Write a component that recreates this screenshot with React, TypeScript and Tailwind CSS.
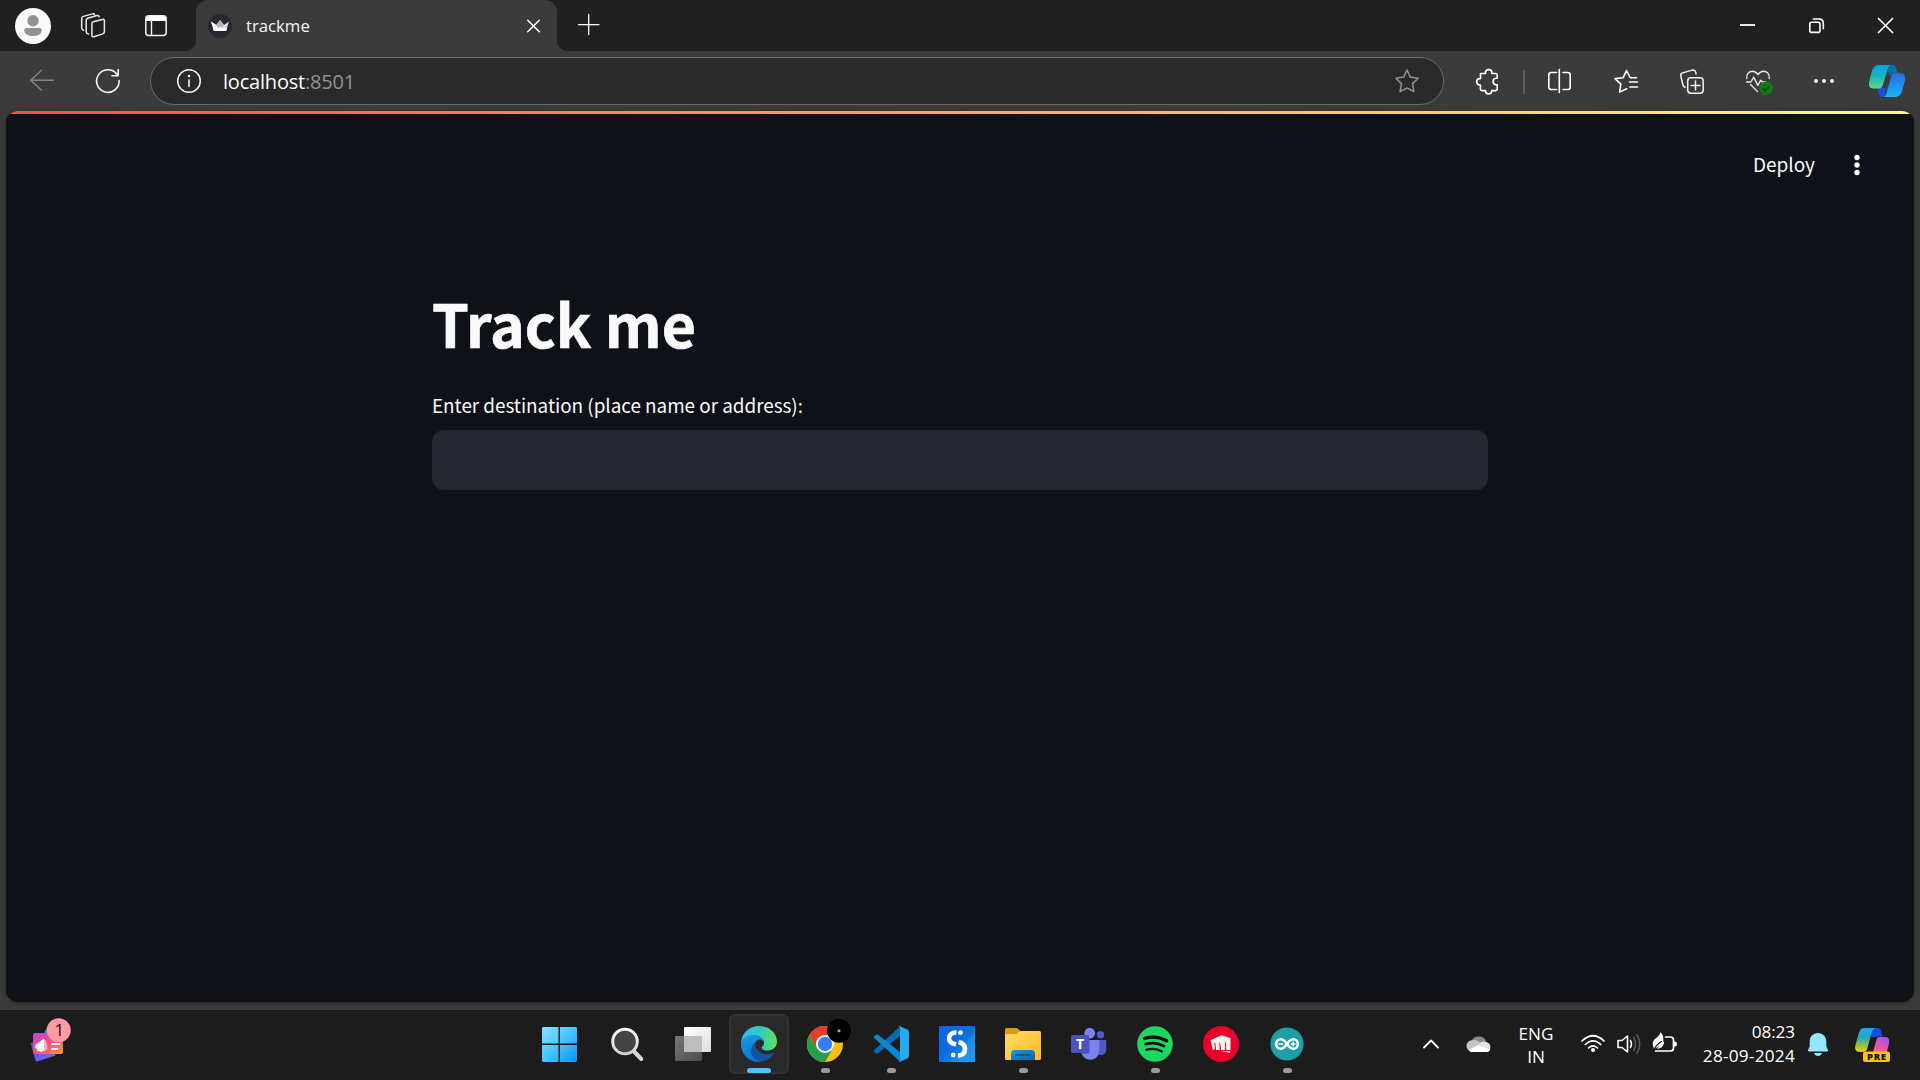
import type { ReactNode } from "react";

type ArtProps = { x: number; y: number; w: number; h: number; className?: string; children: ReactNode };

/* Inline drawing whose viewBox is given in page coordinates. */
function Art({ x, y, w, h, className = "", children }: ArtProps) {
  return (
    <svg
      width={w}
      height={h}
      viewBox={`${x} ${y} ${w} ${h}`}
      fill="none"
      stroke="none"
      strokeLinecap="round"
      strokeLinejoin="round"
      className={`block shrink-0 overflow-visible ${className}`}
    >
      {children}
    </svg>
  );
}

function TitleBar() {
  return (
    <header className="flex h-[51px] shrink-0 bg-[#202020]">
      <div className="flex h-full w-[196px] items-start">
        <Art x={15} y={8} w={36} h={36} className="mt-2 ml-[15px]">
          <circle cx="33" cy="26" r="18" fill="#f9f9f9" />
          <circle cx="33" cy="20.7" r="5.7" fill="#929292" />
          <path d="M26.5 28h13c1.4 0 2.2.8 2.2 2.2 0 3.500-4 5.900-8.700 5.900s-8.700-2.400-8.700-5.900c0-1.400.8-2.200 2.200-2.200z" fill="#929292" />
        </Art>
        <Art x={80} y={12} w={27} h={27} className="mt-3 ml-[29px]">
          <g stroke="#e8e8e8" strokeWidth="1.5">
            <path d="M93.200 21.700 102.400 19.400q2-.4 2 1.600v10.800q0 1.600-1.600 2.100l-8.900 2.800q-2 .5-2-1.500V23.700q0-1.600 1.300-2z" />
            <path d="M88.700 33.900l-1-.2q-1.500-.4-1.500-2V20.500q0-1.700 1.500-2.200l9.300-2.800q1.800-.4 2.200 1.300" />
            <path d="M83.500 30.200l-.8-.3q-1-.4-1-1.800V18.600q0-1.700 1.600-2.200l9.200-2.500q1.600-.4 2.100.9" />
          </g>
        </Art>
        <Art x={145} y={15} w={22} h={22} className="mt-[15px] ml-[38px]">
          <rect x="145.800" y="15.800" width="20.400" height="19.600" rx="3" stroke="#f2f2f2" strokeWidth="1.500" />
          <path d="M146 21v-2q0-3 3-3h14q3 0 3 3v2z" fill="#fff" />
          <path d="M151.500 21v14" stroke="#f2f2f2" strokeWidth="1.400" />
        </Art>
      </div>
      <div className="relative flex h-full w-[361px] items-center rounded-t-[12px] bg-[#3b3b3b]">
        <div className="absolute bottom-0 -left-[10px] size-[10px] bg-[#3b3b3b]">
          <div className="size-full rounded-br-[10px] bg-[#202020]" />
        </div>
        <div className="absolute -right-[10px] bottom-0 size-[10px] bg-[#3b3b3b]">
          <div className="size-full rounded-bl-[10px] bg-[#202020]" />
        </div>
        <Art x={208} y={14} w={24} h={24} className="ml-3">
          <circle cx="220" cy="26" r="12" fill="#262730" />
          <path d="M211 21.500l5.200 3.500 3.900-5 3.900 5 5-3.500-2.900 9.500H214z" fill="#d8d8d8" />
          <path d="M211 21.500l5.200 3.500L220 31h-6z" fill="#fff" />
          <path d="M216.200 25l3.900-5 3.900 5-4 6z" fill="#b4b4b4" />
          <path d="M213.200 28.500l6.900-1.500 6.700 1.500-.7 2.500H214z" fill="#fff" />
        </Art>
        <span className="ml-[14px] w-[281px] font-['Open_Sans'] text-[16.800px] leading-6 tracking-[-0.03px] text-[#f4f4f4]">trackme</span>
        <Art x={527} y={19} w={13} h={13}>
          <path d="M527.700 20.200l11.600 11.600m0-11.600l-11.600 11.600" stroke="#fff" strokeWidth="1.500" />
        </Art>
      </div>
      <Art x={578} y={14} w={22} h={22} className="mt-[14px] ml-[21px]">
        <path d="M578.500 24.600h20.500M588.700 14.500v20" stroke="#fff" strokeWidth="1.300" />
      </Art>
      <Art x={1740} y={17} w={16} h={16} className="mt-[17px] ml-auto">
        <path d="M1740 25h15" stroke="#fff" strokeWidth="1.800" strokeLinecap="butt" />
      </Art>
      <Art x={1808} y={17} w={17} h={17} className="mt-[17px] ml-[52px]">
        <rect x="1809.800" y="22.200" width="10.200" height="10.200" rx="2" stroke="#fff" strokeWidth="1.600" />
        <path d="M1813.300 19h5.700q4.300 0 4.300 4.300v5.500" stroke="#fff" strokeWidth="1.600" />
      </Art>
      <Art x={1877} y={17} w={17} h={17} className="mt-[17px] mr-[26px] ml-[52px]">
        <path d="M1878.500 18.500l14 14m0-14l-14 14" stroke="#fff" strokeWidth="1.700" />
      </Art>
    </header>
  );
}

function Toolbar() {
  return (
    <div className="flex h-[60px] shrink-0 items-start bg-[#3b3b3b]">
      <Art x={29} y={68} w={26} h={26} className="mt-[17px] ml-[29px]">
        <path d="M53.300 80.300H31M41.500 70.300l-10.700 10 10.700 10" stroke="#858585" strokeWidth="1.500" />
      </Art>
      <Art x={95} y={68} w={26} h={26} className="mt-[17px] ml-10">
        <path d="M119.200 80.500A11.300 11.300 0 1 1 116.700 73.900L118 75.700M118.200 69.500v6.300h-6.300" stroke="#f5f5f5" strokeWidth="1.600" />
      </Art>
      <div className="mt-1.5 ml-[29px] flex h-12 w-[1294px] items-center rounded-full border border-[#6a6a6a] bg-[#2a2a2a]">
        <Art x={176} y={68} w={26} h={26} className="ml-[25px]">
          <circle cx="189" cy="81" r="11.300" stroke="#f5f5f5" strokeWidth="1.500" />
          <path d="M189 80v6.500" stroke="#fff" strokeWidth="1.500" />
          <circle cx="189" cy="76" r="1.200" fill="#fff" />
        </Art>
        <div className="mt-0.5 ml-[21px] flex-1 font-['Open_Sans'] text-[20px] leading-6 tracking-[-0.2px] text-white">
          localhost<span className="text-[#929292]">:8501</span>
        </div>
        <Art x={1394} y={68} w={26} h={26} className="mr-[23px]">
          <path d="M1407 70l3.300 7.100 7.900 1.100-5.700 5.400 1.400 8.100-6.900-3.700-6.900 3.700 1.400-8.100-5.700-5.400 7.900-1.100z" stroke="#929292" strokeWidth="1.500" />
        </Art>
      </div>
      <Art x={1475} y={68} w={26} h={28} className="mt-[17px] ml-[31px]">
        <path
          d="M1480.500 73.500h5v-.7a3.200 3.200 0 0 1 6.400 0v.7h3.700q1.600 0 1.600 1.600v3.200h-.9a3.200 3.200 0 0 0 0 6.400h.9v4.300q0 1.600-1.600 1.600h-3.900v.2a3 3 0 0 1-6.200 0v-.2h-3.500q-1.600 0-1.600-1.600v-4h-.5a3 3 0 0 1 0-6.400h.6v-3.200q0-1.600 0-1.600z"
          stroke="#fff"
          strokeWidth="1.600"
        />
      </Art>
      <div className="mt-[19px] ml-[22px] h-6 w-[2px] bg-[#5c5c5c]" />
      <Art x={1547} y={68} w={26} h={26} className="mt-[17px] ml-[22px]">
        <path d="M1555.500 72.500h-4.200q-2.500 0-2.500 2.500v12q0 2.500 2.500 2.500h4.200M1563 72.500h4.700q2.500 0 2.500 2.500v12q0 2.500-2.500 2.500h-4.700M1559.300 69.500v23M1555.500 72.500h1M1555.500 89.500h1" stroke="#fff" strokeWidth="1.600" />
      </Art>
      <Art x={1613} y={68} w={26} h={26} className="mt-[17px] ml-10">
        <path d="M1636.500 77.700h-6.300l-3.700-7-3.300 7-8.200.9 5.800 5.500-1.200 8 7-3.300M1629.500 82h8M1630 87h7.500" stroke="#fff" strokeWidth="1.600" />
      </Art>
      <Art x={1679} y={68} w={26} h={27} className="mt-[17px] ml-10">
        <rect x="1687.700" y="77.700" width="15.500" height="15.500" rx="3.200" stroke="#f2f2f2" strokeWidth="1.500" />
        <path d="M1695.500 81v9M1691 85.500h9M1685 87.300q-1.600-.6-2.100-2.500l-2.100-8.700q-.5-2.500 1.800-3.200l9.500-2.800q2.900-.6 3.600 2.100l.4 1.900" stroke="#f2f2f2" strokeWidth="1.500" />
      </Art>
      <Art x={1745} y={68} w={30} h={28} className="mt-[17px] ml-10">
        <path d="M1746.800 78.500c-.6-4.500 2.300-7.300 5.600-7.300 2.900 0 4.300 1.500 5.600 3.300 1.300-1.800 2.700-3.300 5.600-3.300 3.300 0 6.200 2.800 5.600 7.300M1746.500 82h4.300l3-4.800 4 8.200 3-5.200 1.700 1.800h3M1750.500 84.500l7 7" stroke="#e8e8e8" strokeWidth="1.400" />
        <circle cx="1766.200" cy="88.200" r="6.800" fill="#107c10" />
        <path d="M1763.200 88.600l2.200 2.200 4.100-4.500" stroke="#123d12" strokeWidth="1.500" />
      </Art>
      <Art x={1813} y={70} w={22} h={22} className="mt-[19px] ml-[38px]">
        <g fill="#fff">
          <circle cx="1816" cy="81" r="1.900" />
          <circle cx="1824" cy="81" r="1.900" />
          <circle cx="1832" cy="81" r="1.900" />
        </g>
      </Art>
      <Art x={1868} y={64} w={38} h={34} className="mt-[13px] ml-[33px]">
        <defs>
          <linearGradient id="edgeCopilotA" x1="0" y1="0" x2="0" y2="1">
            <stop offset="0" stopColor="#0c9fe0" />
            <stop offset=".5" stopColor="#16b9c0" />
            <stop offset="1" stopColor="#5fdc7c" />
          </linearGradient>
          <linearGradient id="edgeCopilotB" x1="0" y1="0" x2="0" y2="1">
            <stop offset="0" stopColor="#2b6de0" />
            <stop offset="1" stopColor="#16b4ff" />
          </linearGradient>
        </defs>
        <path d="M1886 65h6.500c2.500 0 3.300 2 4 4.500l1.300 3.700h-3c-3 0-4 1.500-4.700 4z" fill="#0d6f9c" />
        <path d="M1877.500 88h8l2.300-7-2.800 13c-.4 2-1.500 3-3.300 3-2.500 0-3.200-3.500-4.200-9z" fill="#1b50d8" />
        <path d="M1880 65h12c-3 .3-3.700 2.500-4.500 5l-4.500 14.500c-.8 2.700-1.600 4-4.500 4h-5c-4.500 0-5.200-3.500-4-8l2.500-9.500c1.200-4 3.500-6 8-6z" fill="url(#edgeCopilotA)" />
        <path d="M1894.500 73.300h6c4 0 5.500 3 4.200 8l-2.500 9.200c-1.200 4.300-3.200 6.500-7.500 6.500h-12.500c3 0 3.800-2 4.500-4.500l4.300-15c.7-2.700 1.300-4.200 3.500-4.200z" fill="url(#edgeCopilotB)" />
      </Art>
    </div>
  );
}

function StreamlitPage() {
  return (
    <main className="relative mx-1.5 flex h-[891px] flex-col overflow-hidden rounded-[12px] bg-[#0e1117] font-['Noto_Sans_CJK_SC',sans-serif] text-[#fafafa] shadow-[0_1px_4px_rgba(0,0,0,0.4)]">
      <div className="h-[3px] shrink-0 bg-[linear-gradient(90deg,#ff4b4b,#fffd80)]" />
      <div className="flex h-[101px] shrink-0 items-center justify-end pr-[53px]">
        <span className="mb-0.5 text-[19px] leading-7">Deploy</span>
        <Art x={1853} y={154} w={8} h={22} className="ml-[38px]">
          <g fill="#fff">
            <circle cx="1857" cy="157.500" r="2.700" />
            <circle cx="1857" cy="165" r="2.700" />
            <circle cx="1857" cy="172.500" r="2.700" />
          </g>
        </Art>
      </div>
      <section className="mx-auto mt-[68px] w-[1056px]">
        <h1 className="h-[79px] text-[59px] leading-[79px] font-bold [-webkit-text-stroke:0.7px_#fafafa]">Track me</h1>
        <label className="mt-[27px] block h-8 text-[18.900px] leading-8 tracking-[-0.03px]">Enter destination (place name or address):</label>
        <input aria-label="Enter destination" className="mt-[9px] block h-[60px] w-full rounded-[12px] bg-[#262730] px-5 outline-none" />
      </section>
    </main>
  );
}

function Slot({ children, running, active }: { children: ReactNode; running?: boolean; active?: boolean }) {
  return (
    <div className="relative flex h-[60px] w-[66px] items-center justify-center">
      {active && <div className="absolute inset-x-[3px] inset-y-0 rounded-[6px] border-2 border-[#323232] bg-[#292929]" />}
      <div className="relative">{children}</div>
      {active && <div className="absolute bottom-px left-[21px] h-[5px] w-6 rounded-full bg-[#4cc2ff]" />}
      {running && <div className="absolute bottom-px left-[29px] h-[5px] w-[9px] rounded-full bg-[#9a9a9a]" />}
    </div>
  );
}

function TaskbarApps() {
  return (
    <div className="flex">
      <Slot>
        <Art x={0} y={0} w={36} h={36} className="-translate-x-[2px]">
          <defs>
            <linearGradient id="winLogo" x1="0" y1="0" x2="36" y2="36" gradientUnits="userSpaceOnUse">
              <stop stopColor="#8fe1ff" />
              <stop offset=".45" stopColor="#4ccaff" />
              <stop offset="1" stopColor="#0a93ff" />
            </linearGradient>
          </defs>
          <path d="M2 1H17.500v16.500H1V2zM19 1H35l1 1v15.500H19zM1 19h16.500v17H2l-1-1zM19 19h17v16l-1 1H19z" fill="url(#winLogo)" />
        </Art>
      </Slot>
      <Slot>
        <Art x={0} y={0} w={36} h={36}>
          <defs>
            <linearGradient id="lens" x1="0" y1="0" x2="0" y2="1">
              <stop stopColor="#fbfbfb" />
              <stop offset="1" stopColor="#cfd2d6" />
            </linearGradient>
          </defs>
          <path d="M25 25.500l7.300 7.500" stroke="#d5d7da" strokeWidth="4" />
          <circle cx="16" cy="15.500" r="12.300" fill="#444" stroke="url(#lens)" strokeWidth="3" />
        </Art>
      </Slot>
      <Slot>
        <Art x={0} y={0} w={36} h={36}>
          <defs>
            <linearGradient id="viewBack" x1="0" y1="0" x2="1" y2="1">
              <stop stopColor="#777" />
              <stop offset="1" stopColor="#4b4b4b" />
            </linearGradient>
            <linearGradient id="viewFront" x1="0" y1="0" x2="1" y2="1">
              <stop stopColor="#fff" />
              <stop offset="1" stopColor="#dedede" />
            </linearGradient>
          </defs>
          <rect y="10" width="27" height="25" rx="1.300" fill="url(#viewBack)" />
          <rect x="9" y="1" width="27" height="25" rx="1.300" fill="url(#viewFront)" />
          <path d="M9 10h18v16H10l-1-1z" fill="#bdbdbd" />
        </Art>
      </Slot>
      <Slot active>
        <Art x={0} y={0} w={36} h={36}>
          <defs>
            <linearGradient id="edgeTop" x1="0" y1=".6" x2="1" y2=".6">
              <stop stopColor="#35b8f0" />
              <stop offset=".5" stopColor="#2fc8c8" />
              <stop offset="1" stopColor="#66e04e" />
            </linearGradient>
            <linearGradient id="edgeSide" x1="0" y1="0" x2=".4" y2="1">
              <stop stopColor="#1d9ce0" />
              <stop offset="1" stopColor="#0a75d6" />
            </linearGradient>
          </defs>
          <path d="M0 17C.5 7 8 0 18 0c10.500 0 18 7.200 18 15.500 0 5.300-4 9-9.300 9-4 0-6-1.300-6-2.700 0-1 2.300-1.700 2.300-5 0-4.500-5-7.300-10.500-7.300C6.500 9.500 2 12.500 0 17z" fill="url(#edgeTop)" />
          <path d="M0 17c2-5 6.500-8 12.500-8 5.500 0 10.500 3.300 10.500 7.300-1.300-2.300-3.300-2.800-4.500-2.800-2.500 0-6.500 5-6.500 10.500 0 6 4 11 9 11.500C9 38 0 28.500 0 18z" fill="url(#edgeSide)" />
          <path d="M14.500 16C11 19 9.500 22.500 10 26.500 11 32 16 36 21 35.500c5-.8 9.300-3.500 12-7.700.5-.8-.2-1.300-1-.9-7.500 3.300-16.500 0-17.500-7.400-.2-1.300-.3-2.500 0-3.500z" fill="#1053a3" />
        </Art>
      </Slot>
      <Slot running>
        <Art x={0} y={0} w={36} h={36}>
          <circle cx="18" cy="18" r="18" fill="#fbbf13" />
          <path d="M18 9h15.600A18 18 0 0 0 2.400 9l7.800 13.500z" fill="#e33b2e" />
          <path d="M2.400 9A18 18 0 0 0 18 36l7.800-13.500L18 27l-7.800-4.500z" fill="#2a9d4a" />
          <circle cx="18" cy="18" r="9" fill="#fff" />
          <circle cx="18" cy="18" r="7.200" fill="#3b7ded" />
          <circle cx="32" cy="4.700" r="12" fill="#000" />
          <circle cx="32" cy="4.700" r="1.500" fill="#aaa" />
        </Art>
      </Slot>
      <Slot running>
        <Art x={0} y={0} w={36} h={36}>
          <path d="M1 24.300L27 .4V10L5 27.300q-1 .6-2 0l-2-1.500q-.8-.8 0-1.500z" fill="#0a6cae" />
          <path d="M1 11.700L27 35.600V26L5 8.700q-1-.6-2 0l-2 1.500q-.8.800 0 1.500z" fill="#0b87cc" />
          <path d="M27 .3l7.800 3.500Q36 4.500 36 6v24q0 1.500-1.200 2.200L27 35.700q-1.300.5-2-.4 1.800 1 2-1.500V2.200q-.2-2.500-2-1.500.7-.9 2-.4z" fill="#27a9f2" />
        </Art>
      </Slot>
      <Slot>
        <Art x={0} y={0} w={36} h={36}>
          <defs>
            <linearGradient id="blueTile" x1="0" y1="0" x2="1" y2="1">
              <stop stopColor="#0a63dd" />
              <stop offset=".5" stopColor="#0c6fe0" />
              <stop offset="1" stopColor="#22a5f5" />
            </linearGradient>
          </defs>
          <path d="M0 0h36v36H0z" fill="url(#blueTile)" />
          <path d="M36 6v30H12q4-4 10-10l8-12z" fill="#1f96ec" opacity=".6" />
          <path d="M17.500 6.500c-5 0-7.500 2.500-7.500 6s3 5 7 6M19.500 16c4 1 6.500 3 6.500 7s-2.500 6.500-7 6.500" stroke="#fff" strokeWidth="4.600" strokeLinecap="butt" />
          <circle cx="21.500" cy="6.700" r="2.400" fill="#fff" />
          <circle cx="14.200" cy="29" r="2.400" fill="#fff" />
        </Art>
      </Slot>
      <Slot running>
        <Art x={0} y={0} w={36} h={36}>
          <defs>
            <linearGradient id="folder" x1="0" y1="0" x2="1" y2="1">
              <stop stopColor="#ffdb6b" />
              <stop offset="1" stopColor="#fdbb1b" />
            </linearGradient>
            <linearGradient id="folderClip" x1="0" y1="0" x2="1" y2="1">
              <stop stopColor="#149be2" />
              <stop offset="1" stopColor="#0b62b6" />
            </linearGradient>
          </defs>
          <path d="M0 3.500Q0 2 1.500 2H11q1 0 1.700.6L16 5.500V10H0z" fill="#dd9b07" />
          <path d="M0 8h10q1.200 0 2-.6l2-1.700q.8-.7 2-.7h18.500Q36 5 36 6.500v26q0 1.500-1.500 1.500h-33Q0 34 0 32.500z" fill="url(#folder)" />
          <path d="M6 34v-6.500Q6 24 9.500 24h17q3.500 0 3.500 3.500V34z" fill="url(#folderClip)" />
          <path d="M11 29h14" stroke="#0b4f8f" strokeWidth="1.600" />
        </Art>
      </Slot>
      <Slot>
        <Art x={0} y={0} w={36} h={36}>
          <circle cx="29.500" cy="8.700" r="3.700" fill="#5059c9" />
          <path d="M25 14h9q1.300 0 1.300 1.300V23c0 4-2.500 6-5.700 6-2 0-4.600-1.500-4.600-4z" fill="#5059c9" />
          <circle cx="18.700" cy="7.200" r="5.400" fill="#7b83eb" />
          <path d="M11 14h16q1.300 0 1.300 1.300V24c0 6-4 9.700-9 9.700S10 30 10 24z" fill="#7b83eb" />
          <path d="M10 24V12h8.500v16h-8z" fill="#4d54b4" opacity=".7" />
          <rect y="9" width="18" height="18" rx="1.400" fill="#4b53bc" />
          <text x="9" y="23" textAnchor="middle" fill="#fff" fontFamily="Open Sans" fontWeight="700" fontSize="14">T</text>
        </Art>
      </Slot>
      <Slot running>
        <Art x={0} y={0} w={36} h={36}>
          <circle cx="18" cy="18" r="17.800" fill="#1ed760" />
          <path d="M7.500 12.500c7-2.200 15.500-1.500 22 2.200" stroke="#0a0a0a" strokeWidth="3.400" />
          <path d="M8.500 18.200c6-1.800 13-1.200 18.600 2" stroke="#0a0a0a" strokeWidth="2.700" />
          <path d="M9.300 23.800c5-1.400 11-1 15.500 1.700" stroke="#0a0a0a" strokeWidth="2.200" />
        </Art>
      </Slot>
      <Slot>
        <Art x={0} y={0} w={36} h={36}>
          <circle cx="18" cy="18" r="18" fill="#eb0029" />
          <path d="M7.700 14l10.800-4.800L27.500 12v12h-4.200l-.5-6-.8 6h-4l-1-5.500-.3 5.500h-3.500l-1.200-5v4.500h-2.500z" fill="#f3f4ef" />
          <path d="M18 25h9v2z" fill="#f3f4ef" />
          <path d="M11.800 17l.8 6.500M16.800 17l.6 6.500M22.500 16.500l-.1 7" stroke="#eb0029" strokeWidth=".9" />
        </Art>
      </Slot>
      <Slot running>
        <Art x={0} y={0} w={36} h={36}>
          <circle cx="18" cy="18" r="16.600" fill="#1c9fa6" />
          <path d="M18 18C15.500 14.500 14 13.300 11.800 13.300a4.700 4.700 0 0 0 0 9.400C14 22.700 15.500 21.500 18 18s4-4.700 6.200-4.700a4.700 4.700 0 0 1 0 9.400C22 22.700 20.500 21.500 18 18z" stroke="#fff" strokeWidth="2.600" />
          <path d="M10 18h3.600M22.400 18H26M24.200 16.200v3.600" stroke="#fff" strokeWidth="1.500" />
        </Art>
      </Slot>
    </div>
  );
}

function Tray() {
  return (
    <div className="flex h-[66px] items-start">
      <Art x={1421} y={1036} w={20} h={14} className="mt-[22px]">
        <path d="M1424 1047.500l7-7 7 7" stroke="#fff" strokeWidth="1.800" />
      </Art>
      <Art x={1467} y={1035} w={24} h={18} className="mt-[21px] ml-[26px]">
        <path d="M1471.500 1041.500a7.500 6.500 0 0 1 14.500-.3l-6 5z" fill="#8b8b8b" />
        <path d="M1472 1051.500a5.600 5.600 0 0 1 0-11.200q4-.8 7 1.700l8 4-8 5.500z" fill="#c7c7c7" />
        <path d="M1469 1050l10-6q4-4 8.300-1.500a5 5 0 0 1-.8 9.500H1472q-2 0-3-2z" fill="#e3e3e3" />
        <path d="M1469 1050.300l9.500-4.800 11.700 4.200q-1.200 2.300-4 2.300H1472q-1.900 0-3-1.700z" fill="#fff" />
      </Art>
      <div className="mt-2 ml-[20px] w-[50px] text-center text-[17.200px] leading-[23px] text-white">
        <div>ENG</div>
        <div>IN</div>
      </div>
      <Art x={1580} y={1033} w={26} h={20} className="mt-[19px] ml-[19px]">
        <g stroke="#fff" strokeWidth="1.700">
          <path d="M1582 1041q11-10.500 22 0M1585.300 1044.500q7.700-7.300 15.400 0M1588.500 1048q4.500-4.300 9 0" />
        </g>
        <circle cx="1593" cy="1050" r="2" fill="#fff" />
      </Art>
      <Art x={1616} y={1033} w={26} h={22} className="mt-[19px] ml-[10px]">
        <path d="M1618 1040.500h4l5.500-4.500v16l-5.500-4.500h-4z" stroke="#fff" strokeWidth="1.600" />
        <path d="M1630.500 1040.500q2 3.500 0 7" stroke="#fff" strokeWidth="1.500" />
        <path d="M1633.800 1037.500q3.500 6.500 0 13M1637 1034.800q5.500 9.200 0 18.400" stroke="#5a5a5a" strokeWidth="1.500" />
      </Art>
      <Art x={1652} y={1031} w={26} h={22} className="mt-[17px] ml-[10px]">
        <path d="M1665.500 1037h5q3 0 3 3v8q0 3-3 3h-15" stroke="#fff" strokeWidth="1.700" />
        <path d="M1674 1041.500h1q2 0 2 2.500t-2 2.500h-1z" fill="#fff" />
        <path d="M1660.500 1032c3.300 3.500 3.800 9 1.500 12.500l-6.300 3.800-1.700.2c-1.600-3-1.700-6.500 0-8.500 2.500-2.500 5.500-3.500 6.500-8z" fill="#fff" />
        <path d="M1664 1041c.3 4.500-2.500 7.500-7 7.800z" fill="#fff" />
        <path d="M1654 1050c1.500-4 4-6.500 7.500-8.500" stroke="#1c1c1c" strokeWidth="1.300" />
      </Art>
      <div className="mt-1.5 ml-[17px] w-[100px] text-right text-[17.200px] leading-[24px] whitespace-nowrap text-white">
        <div className="tracking-[-0.1px]">08:23</div>
        <div className="tracking-[0.25px]">28-09-2024</div>
      </div>
      <Art x={1807} y={1032} w={22} h={25} className="mt-[18px] ml-3">
        <path d="M1818 1033c5 0 8.300 3.700 8.300 8.300v5.200l1.700 3.600q.4 1.400-1 1.400h-18q-1.400 0-1-1.400l1.700-3.600v-5.200c0-4.600 3.300-8.300 8.300-8.300zM1814 1053h8q-1 3-4 3t-4-3z" fill="#96e6ff" />
      </Art>
      <Art x={1854} y={1027} w={36} h={36} className="mt-[13px] mr-[30px] ml-[25px]">
        <defs>
          <linearGradient id="copilotLeft" x1="0" y1="0" x2="0" y2="1">
            <stop stopColor="#20a5f5" />
            <stop offset=".4" stopColor="#22a8b8" />
            <stop offset=".75" stopColor="#a5c33a" />
            <stop offset="1" stopColor="#f2c51e" />
          </linearGradient>
          <linearGradient id="copilotRight" x1=".7" y1="0" x2=".3" y2="1">
            <stop stopColor="#a950f0" />
            <stop offset=".55" stopColor="#e8589c" />
            <stop offset="1" stopColor="#ff7e63" />
          </linearGradient>
        </defs>
        <path d="M1868 1028h9c3 0 3.800 2 4.500 4.500l1.300 4h-5l-6 1z" fill="#1550d8" />
        <path d="M1879 1037h6c3.500 0 5 2.500 4 6.500l-2 8q-1.500 5-6 6h-9.500l4.500-16c.8-3 1-4.500 3-4.500z" fill="url(#copilotRight)" />
        <path d="M1864 1028h12c-3 .5-3.700 2.500-4.500 5.500l-4 14c-.9 3-1.800 4.500-5 4.500h-3c-4 0-5-3-4-7l3-11c1-4 2.500-6 5.500-6z" fill="url(#copilotLeft)" />
        <rect x="1863" y="1051.500" width="27" height="10.500" rx="2.500" fill="#ffc40a" />
        <text x="1876.800" y="1060.200" textAnchor="middle" fontFamily="Open Sans" fontWeight="800" fontSize="9.500" letterSpacing=".6" fill="#111">PRE</text>
      </Art>
    </div>
  );
}

function Taskbar() {
  return (
    <footer className="flex h-[70px] shrink-0 items-start bg-[#1c1c1c] pt-1 font-['Open_Sans']">
      <div className="flex w-[528px] shrink-0 items-start">
        <Art x={30} y={1018} w={42} h={44} className="mt-1 ml-[30px]">
          <defs>
            <linearGradient id="promo" x1="0" y1="0" x2="1" y2="1">
              <stop stopColor="#b84be0" />
              <stop offset=".5" stopColor="#ee4d83" />
              <stop offset="1" stopColor="#ff9a3c" />
            </linearGradient>
            <linearGradient id="promoBack" x1="0" y1="0" x2="1" y2="1">
              <stop stopColor="#2f5fd0" />
              <stop offset="1" stopColor="#8a5cf5" />
            </linearGradient>
          </defs>
          <circle cx="54" cy="1035" r="10" fill="#1795e0" />
          <path d="M30.500 1043l19-5 6 17.500-18 6q-1.500.3-2-1z" fill="url(#promoBack)" />
          <rect x="33" y="1033" width="30" height="21" rx="2" fill="url(#promo)" />
          <path d="M36 1044.500l8-6v12.500l-8-2.500q-1.500-2 0-4z" fill="#fff" />
          <path d="M44 1038.500q4 4 3.300 11l-3.300 1.500z" fill="#f7b3cb" />
          <path d="M38 1050l4 1" stroke="#fff" strokeWidth="2" />
          <path d="M52 1044h7.500M52 1049h5.500" stroke="#fff" strokeWidth="1.900" />
          <circle cx="58.700" cy="1030.300" r="12" fill="#ff99a4" />
          <text x="59.400" y="1036" textAnchor="middle" fontFamily="Open Sans" fontSize="17" fill="#1a0a0c">1</text>
        </Art>
      </div>
      <TaskbarApps />
      <div className="ml-auto">
        <Tray />
      </div>
    </footer>
  );
}

export default function App() {
  return (
    <div className="flex h-[1080px] w-[1920px] flex-col overflow-hidden bg-[#3b3b3b]">
      <TitleBar />
      <Toolbar />
      <StreamlitPage />
      <div className="h-2 shrink-0" />
      <Taskbar />
    </div>
  );
}
